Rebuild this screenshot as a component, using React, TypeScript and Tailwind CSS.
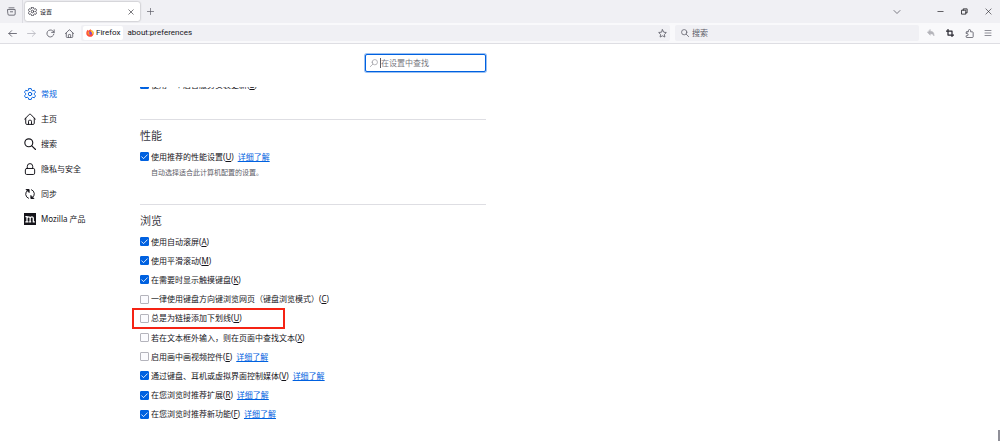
import React from "react";

type IconProps = { className?: string; children: React.ReactNode; w?: number };

function Icon({ className = "size-3", children, w = 1.3 }: IconProps) {
  return (
    <svg viewBox="0 0 16 16" className={`shrink-0 ${className}`} fill="none" stroke="currentColor" strokeWidth={w} strokeLinecap="round" strokeLinejoin="round" aria-hidden="true">
      {children}
    </svg>
  );
}

const gear = (
  <>
    <path d="M6.4.8q1.6-.4 3.2 0l.5 2.1 1.5.85 2.1-.65q1.200 1.200 1.600 2.800L13.700 7.200v1.600l1.600 1.400q-.4 1.600-1.600 2.800l-2.100-.65-1.500.85-.5 2.100q-1.600.4-3.200 0l-.5-2.100-1.500-.85-2.100.65Q1.100 11.800.7 10.200l1.600-1.400V7.200L.7 5.900q.4-1.600 1.600-2.800l2.100.65 1.500-.85z" />
    <circle cx="8" cy="8" r="2.300" />
  </>
);
const home = <path d="M.8 8.300 7.200 1.700q.8-.8 1.600 0l6.400 6.600M2.300 7v6.700q0 1.500 1.500 1.500h8.400q1.500 0 1.500-1.500V7M6 15v-4q0-1.300 1.300-1.300h1.400Q10 9.700 10 11v4" />;
const search = (
  <>
    <circle cx="6.400" cy="6.400" r="5.300" />
    <path d="m10.400 10.400 5 4.900" />
  </>
);
const lock = (
  <>
    <rect x="1.800" y="7.300" width="12.400" height="8" rx="1.800" />
    <path d="M4.400 7.200V4.400a3.600 3.600 0 0 1 7.200 0v2.800" />
  </>
);
const sync = (
  <>
    <path d="M6 13.700A6 6 0 0 1 5 3.100M10 2.300a6 6 0 0 1 1 10.600" />
    <path d="M3.300 2h3.500v3.500zM12.700 14H9.200v-3.500z" fill="currentColor" />
  </>
);

function MozillaMark() {
  return (
    <svg viewBox="0 0 16 16" className="size-3 shrink-0" aria-hidden="true">
      <rect width="16" height="16" fill="#15141a" />
      <path d="M1.800 4.800H4v6.700M1.800 11.700h4.200M4 7.200c.5-2.600 4.200-2.900 4.200 0v4.300M6.800 11.700h2.800M8.200 7.200c.5-2.600 4.200-2.900 4.200 0v4.500h2" fill="none" stroke="#fff" strokeWidth="1.700" />
    </svg>
  );
}

function FirefoxMark() {
  return (
    <svg viewBox="0 0 16 16" className="size-2 shrink-0" aria-hidden="true">
      <path d="M1.600 4.200 3 1.600l1.400 2L9.300.6c.2 1.700 2.200 2.200 3.300 3.500l.3-1.300c2.900 3 3.200 7.400.5 10.500-3 3.300-8.400 3-11.200-.3C.1 10.600.2 7 1.600 4.200Z" fill="#ff4b3a" />
      <path d="M9.300.6c.2 1.700 2.200 2.200 3.300 3.500l.3-1.300c2.500 2.700 3 6.300 1.200 9.300-1.500-3.300-5.400-4.800-4.800-11.500Z" fill="#ffc52f" />
      <circle cx="8" cy="8.400" r="3.600" fill="#7a3fe0" />
      <path d="M3.500 5c2 0 3 .3 4.200 1.400l-2 1.100c.2 2 2 2.700 4 1.900-1 2.500-5.300 2.700-6.500-.6Z" fill="#ff9a26" />
    </svg>
  );
}

function ToolButton({ label, className = "", children }: { label: string; className?: string; children: React.ReactNode }) {
  return (
    <button type="button" aria-label={label} className={`flex size-4 shrink-0 items-center justify-center ${className}`}>
      {children}
    </button>
  );
}

function TitleBar() {
  return (
    <header className="flex h-[23px] items-center bg-[#f0f0f4] text-[#5b5b66]">
      <div className="flex w-[23px] shrink-0 items-center justify-center self-stretch border-r border-[#dcdce2]">
        <button type="button" aria-label="Firefox View">
          <Icon className="size-[9px]" w={1.500}>
            <path d="M3.500 1.500h9M1.500 4.500h13v8q0 2-2 2h-9q-2 0-2-2zM6 8.500h4" />
          </Icon>
        </button>
      </div>
      <div className="ml-0.5 flex h-[19px] w-[115px] items-center rounded-xs bg-white pr-[5px] pl-[3px] text-[#15141a] shadow-[0_0_2px_rgba(0,0,0,0.4)]">
        <Icon className="size-[9px] text-[#3a3944]" w={1.500}>{gear}</Icon>
        <span className="ml-[3px] flex-1 text-[6px]">设置</span>
        <button type="button" aria-label="关闭标签页" className="flex size-2 items-center justify-center">
          <Icon className="size-[6px]" w={1.500}><path d="m2 2 12 12M14 2 2 14" /></Icon>
        </button>
      </div>
      <ToolButton label="新建标签页" className="ml-[2px]">
        <Icon className="size-[7px]" w={1.600}><path d="M8 1v14M1 8h14" /></Icon>
      </ToolButton>
      <div className="flex-1" />
      <ToolButton label="列出所有标签页" className="mr-[27px]">
        <Icon className="size-[8px]" w={1.600}><path d="m2 5 6 6 6-6" /></Icon>
      </ToolButton>
      <div className="mr-1 flex gap-2 text-[#15141a]">
        <ToolButton label="最小化"><Icon className="size-[7px]" w={1.500}><path d="M2 8h12" /></Icon></ToolButton>
        <ToolButton label="还原">
          <Icon className="size-[7px]" w={1.800}><path d="M2 5h9v9H2zM5 5V2h9v9h-3" /></Icon>
        </ToolButton>
        <ToolButton label="关闭"><Icon className="size-[7px]" w={1.300}><path d="m2 2 12 12M14 2 2 14" /></Icon></ToolButton>
      </div>
    </header>
  );
}

function NavBar() {
  return (
    <nav className="flex h-[21px] items-center border-b border-[#dedee3] bg-[#f9f9fb] pr-1 pl-1 text-[8px] text-[#5b5b66]">
      <div className="flex gap-[3px]">
        <ToolButton label="后退"><Icon className="size-[9px]" w={1.500}><path d="M15 8H1.500M6.500 3l-5 5 5 5" /></Icon></ToolButton>
        <ToolButton label="前进" className="text-[#b9b9c0]"><Icon className="size-[9px]" w={1.500}><path d="M1 8h13.500M9.500 3l5 5-5 5" /></Icon></ToolButton>
        <ToolButton label="刷新"><Icon className="size-[9px]" w={1.500}><path d="M14 9a6.200 6.200 0 1 1-1.800-5.500L14.500 6M14.500 1.500V6H10" /></Icon></ToolButton>
        <ToolButton label="主页"><Icon className="size-[9px]" w={1.500}>{home}</Icon></ToolButton>
      </div>
      <div className="ml-1 flex h-4 flex-1 items-center rounded-xs bg-[#f0f0f4] font-['Roboto','Noto_Sans_CJK_SC',sans-serif] text-[#15141a]">
        <span className="ml-0.5 flex h-[14px] items-center gap-0.5 rounded-xs bg-white px-[3px]">
          <FirefoxMark />
          <span>Firefox</span>
        </span>
        <input aria-label="地址" defaultValue="about:preferences" className="ml-1 min-w-0 flex-1 bg-transparent outline-none" />
        <ToolButton label="添加书签" className="text-[#5b5b66]">
          <Icon className="size-[9px]" w={1.500}><path d="m8 1.300 2.100 4.300 4.700.7-3.400 3.300.8 4.700L8 12.100l-4.200 2.200.8-4.700L1.200 6.300l4.700-.7z" /></Icon>
        </ToolButton>
      </div>
      <label className="mr-1 ml-[5px] flex h-4 w-[244px] items-center rounded-xs bg-[#f0f0f4] px-[6px]">
        <Icon className="size-[8px]" w={1.500}>{search}</Icon>
        <input aria-label="搜索" placeholder="搜索" className="ml-[3px] min-w-0 flex-1 bg-transparent outline-none placeholder:text-[#5b5b66]" />
      </label>
      <div className="flex gap-[3px]">
        <ToolButton label="撤销" className="text-[#b4b4ba]">
          <Icon className="size-[8px]" w={1}><path d="M6.500 1.500v3C12 4.500 15 8 14 14c-1-3-3-4.500-7.500-4.500v3L1 7z" fill="currentColor" /></Icon>
        </ToolButton>
        <ToolButton label="截图" className="text-[#2b2a33]"><Icon className="size-[8px]" w={2.500}><path d="M4 1v11h11M1 4h11v11" /></Icon></ToolButton>
        <ToolButton label="扩展"><Icon className="size-[9px]" w={1.500}><path d="M3.500 5H6V3a2 2 0 0 1 4 0v2h3q1.500 0 1.500 1.500v7.200q0 1.500-1.500 1.500H3.500Q2 15.200 2 13.700V12h1.500a2 2 0 0 0 0-4H2V6.500Q2 5 3.500 5z" /></Icon></ToolButton>
        <ToolButton label="菜单" className="text-[#8f8f98]"><Icon className="size-[8px]" w={2}><path d="M2 3h12M2 8h12M2 13h12" /></Icon></ToolButton>
      </div>
    </nav>
  );
}

const categories = [
  { label: "常规", icon: <Icon>{gear}</Icon>, active: true },
  { label: "主页", icon: <Icon>{home}</Icon> },
  { label: "搜索", icon: <Icon w={1.500}>{search}</Icon> },
  { label: "隐私与安全", icon: <Icon>{lock}</Icon> },
  { label: "同步", icon: <Icon>{sync}</Icon> },
  { label: "Mozilla 产品", icon: <MozillaMark /> },
];

type Option = { text: string; accessKey: string; checked?: boolean; more?: boolean; marked?: boolean };

const browsing: Option[] = [
  { text: "使用自动滚屏", accessKey: "A", checked: true },
  { text: "使用平滑滚动", accessKey: "M", checked: true },
  { text: "在需要时显示触摸键盘", accessKey: "K", checked: true },
  { text: "一律使用键盘方向键浏览网页（键盘浏览模式）", accessKey: "C" },
  { text: "总是为链接添加下划线", accessKey: "U", marked: true },
  { text: "若在文本框外输入，则在页面中查找文本", accessKey: "X" },
  { text: "启用画中画视频控件", accessKey: "E", more: true },
  { text: "通过键盘、耳机或虚拟界面控制媒体", accessKey: "V", checked: true, more: true },
  { text: "在您浏览时推荐扩展", accessKey: "R", checked: true, more: true },
  { text: "在您浏览时推荐新功能", accessKey: "F", checked: true, more: true },
];

function OptionRow({ text, accessKey, checked = false, more, marked }: Option) {
  return (
    <div className="relative flex min-h-[19px] items-center">
      {marked && <div className="pointer-events-none absolute -inset-y-px -left-2 w-[153px] border-2 border-[#f52314]" />}
      <label className="flex items-center gap-[2px]">
        <span className="grid size-[9px]">
          <input
            type="checkbox"
            defaultChecked={checked}
            className="peer col-start-1 row-start-1 size-[9px] appearance-none rounded-[1px] border border-[#b4b4bc] bg-[#fbfbfe] checked:border-[#0061e0] checked:bg-[#0061e0]"
          />
          <span className="pointer-events-none invisible col-start-1 row-start-1 text-white peer-checked:visible">
            <Icon className="size-[9px]" w={1.500}><path d="m3 8.500 3.300 3.300L13 5" /></Icon>
          </span>
        </span>
        <span>
          {text}(<u>{accessKey}</u>)
        </span>
      </label>
      {more && <a href="#more" className="ml-1 text-[#0061e0] underline">详细了解</a>}
    </div>
  );
}

export default function App() {
  return (
    <div className="flex h-screen flex-col overflow-hidden bg-white font-['Noto_Sans','Noto_Sans_CJK_SC',sans-serif] text-[8px] leading-3 text-[#15141a]">
      <TitleBar />
      <NavBar />
      <div className="flex min-h-0 flex-1">
        <aside className="w-[131px] shrink-0 pt-[37px] pl-6">
          <ul>
            {categories.map((c) => (
              <li key={c.label}>
                <a href="#category" className={`flex h-[25px] items-center gap-[5px] ${c.active ? "text-[#0061e0]" : ""}`}>
                  {c.icon}
                  {c.label}
                </a>
              </li>
            ))}
          </ul>
        </aside>
        <main className="flex w-[355px] flex-col">
          <div className="flex h-[43px] shrink-0 justify-end pt-[10px]">
            <label className="flex h-[18px] w-[121px] items-center rounded-xs border border-[#0061e0] bg-white px-1 text-[#8f8f98] ring-1 ring-[#0061e0]/40">
              <Icon className="size-[8px] -scale-x-100" w={1.300}>{search}</Icon>
              <span className="ml-[2px] h-[10px] w-px bg-[#5b5b66]" />
              <input aria-label="在设置中查找" placeholder="在设置中查找" className="min-w-0 flex-1 bg-transparent outline-none placeholder:text-[#77777f]" />
            </label>
          </div>
          <div className="flex min-h-0 flex-1 flex-col overflow-hidden pl-[9px]">
            <div className="-mt-3 shrink-0">
              <OptionRow text="使用一个后台服务安装更新" accessKey="B" checked />
            </div>
            <section className="mt-[25px] shrink-0 border-t border-[#dedee3] pt-2">
              <h2 className="text-[11px] leading-4 text-[#3a3944]">性能</h2>
              <div className="mt-[3px]">
                <OptionRow text="使用推荐的性能设置" accessKey="U" checked more />
              </div>
              <p className="mt-px ml-[11px] text-[7px] text-[#5b5b66]">自动选择适合此计算机配置的设置。</p>
            </section>
            <section className="mt-[25px] shrink-0 border-t border-[#dedee3] pt-2">
              <h2 className="text-[11px] leading-4 text-[#3a3944]">浏览</h2>
              <div className="mt-[3px] grid h-48 auto-rows-fr">
                {browsing.map((o) => (
                  <OptionRow key={o.text} {...o} />
                ))}
              </div>
            </section>
          </div>
        </main>
        <div className="ml-auto h-[11px] w-0.5 self-end bg-[#8f8f98]" />
      </div>
    </div>
  );
}
